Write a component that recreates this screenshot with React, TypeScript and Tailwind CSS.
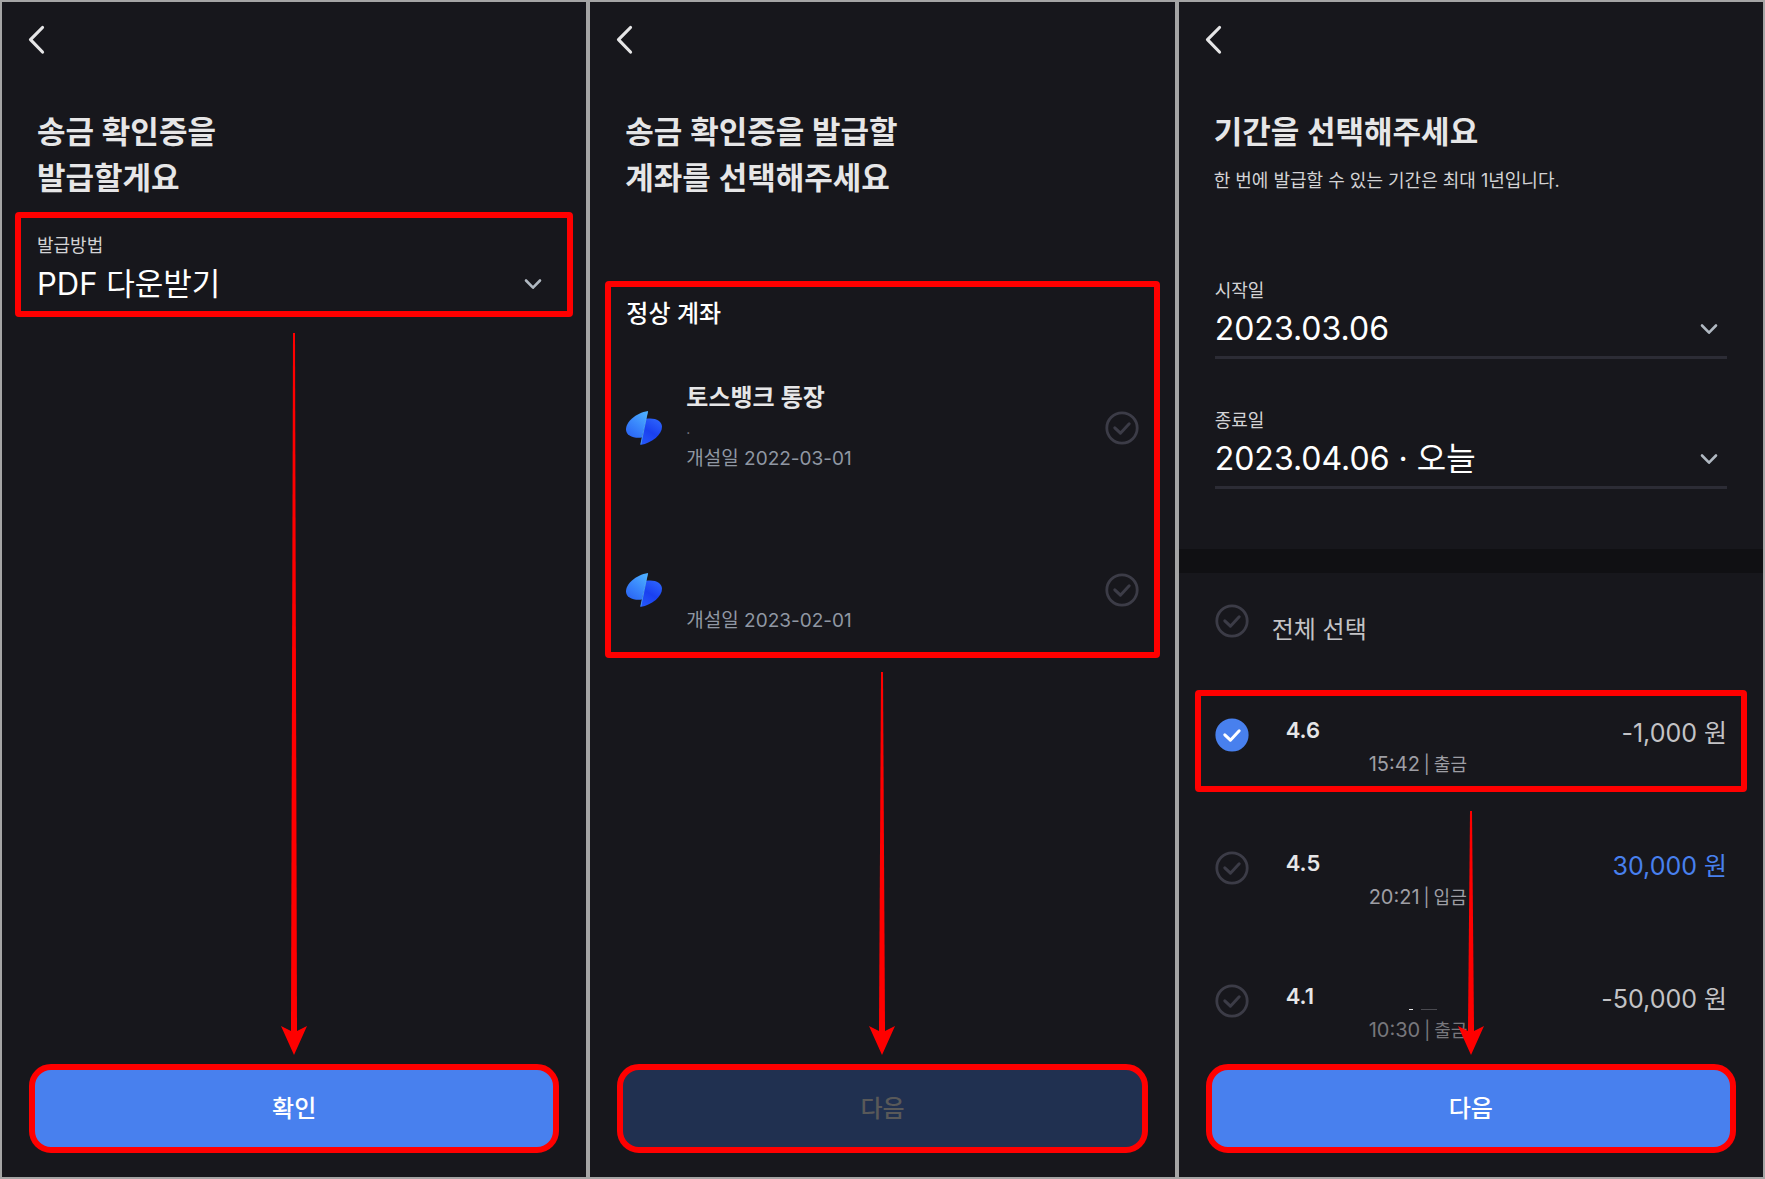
import React from "react";
import clsx from "clsx";

const accounts = [
  { id: "a1", name: "토스뱅크 통장", number: ".", opened: "개설일 2022-03-01" },
  { id: "a2", name: "", number: "", opened: "개설일 2023-02-01" },
];

const transfers = [
  { date: "4.6", time: "15:42", kind: "출금", amount: "-1,000 원", checked: true },
  { date: "4.5", time: "20:21", kind: "입금", amount: "30,000 원", income: true },
  { date: "4.1", time: "10:30", kind: "출금", amount: "-50,000 원", last: true },
];

const BackButton = () => (
  <button type="button" aria-label="뒤로" className="ml-6 mt-5 flex h-9 w-6 items-center">
    <svg width="20" height="30" viewBox="0 0 20 30" fill="none">
      <path
        d="M16.5 2.5L4.5 14.7L16.5 27"
        stroke="#e6e6e7"
        strokeWidth="3.2"
        strokeLinecap="round"
        strokeLinejoin="round"
      />
    </svg>
  </button>
);

const Header = ({ children }: { children: React.ReactNode }) => (
  <header>
    <BackButton />
    <h1 className="ml-[35px] mt-[51px] text-[31px] leading-[46px] font-semibold text-[#e6e6e7]">
      {children}
    </h1>
  </header>
);

type FieldProps = {
  id: string;
  label: string;
  value: string;
  underline?: boolean;
};

const Field = ({ id, label, value, underline }: FieldProps) => (
  <div className={clsx("pb-[7px]", underline && "border-b-3 border-[#2c2c35]")}>
    <label htmlFor={id} className="block text-lg leading-6 text-[#d3d3d5]">
      {label}
    </label>
    <div className="relative mt-1.5">
      <select
        id={id}
        className={clsx(
          "block h-10 w-full appearance-none bg-transparent p-0 leading-10 text-white outline-none",
          underline ? "text-[32px]" : "text-[31px]"
        )}
      >
        <option>{value}</option>
      </select>
      <svg
        className="pointer-events-none absolute right-2 top-3 h-4 w-5"
        viewBox="0 0 20 16"
        fill="none"
      >
        <path
          d="M3 4.5L10 11.7L17 4.5"
          stroke="#b0b8c1"
          strokeWidth="2.6"
          strokeLinecap="round"
          strokeLinejoin="round"
        />
      </svg>
    </div>
  </div>
);

type CheckProps = {
  type: "radio" | "checkbox";
  label: string;
  name?: string;
  checked?: boolean;
};

const Check = ({ type, label, name, checked }: CheckProps) => (
  <label className="relative block h-[34px] w-[34px] shrink-0 cursor-pointer">
    <input
      type={type}
      name={name}
      aria-label={label}
      defaultChecked={checked}
      className="peer sr-only"
    />
    <svg
      viewBox="0 0 34 34"
      fill="none"
      className="h-full w-full fill-transparent stroke-[#3c3c47] peer-checked:fill-[#4880ee] peer-checked:stroke-[#4880ee] peer-checked:[&>path]:stroke-white"
    >
      <circle cx="17" cy="17" r="15.2" strokeWidth="2.8" />
      <path
        d="M9.8 16.8L15.4 22.2L24.2 12.8"
        fill="none"
        strokeWidth="3"
        strokeLinecap="round"
        strokeLinejoin="round"
      />
    </svg>
  </label>
);

const BankLogo = ({ id }: { id: string }) => (
  <svg viewBox="0 0 36 34" className="h-[34px] w-9 shrink-0">
    <defs>
      <linearGradient id={`${id}-l`} x1="0.85" y1="0.1" x2="0.3" y2="1">
        <stop offset="0" stopColor="#4aabff" />
        <stop offset="0.5" stopColor="#3a88fc" />
        <stop offset="1" stopColor="#2c68f4" />
      </linearGradient>
      <linearGradient id={`${id}-r`} x1="0.7" y1="0" x2="0.2" y2="1">
        <stop offset="0" stopColor="#2c62fa" />
        <stop offset="0.5" stopColor="#1a40f0" />
        <stop offset="1" stopColor="#2456f8" />
      </linearGradient>
    </defs>
    <path d="M20 7.8C29 6.2 36 10 36 15.8C36 23.4 26.5 32 14.4 34Z" fill={`url(#${id}-r)`} />
    <path d="M22 0C9.5 2 0 11 0 18.4C0 24.2 7 27.7 15.9 26.6Z" fill={`url(#${id}-l)`} />
    <path d="M21.6 0.4L14.8 33.4" stroke="#58b4ff" strokeWidth="0.7" />
  </svg>
);

// thin at the start, grows towards the head
const Arrow = ({ className }: { className?: string }) => (
  <div className={clsx("pointer-events-none flex flex-col items-center", className)}>
    <svg viewBox="0 0 6 100" preserveAspectRatio="none" className="min-h-0 w-1.5 flex-1">
      <path d="M2 0H4L6 100H0Z" fill="#ff0000" />
    </svg>
    <svg viewBox="0 0 26 29" className="-mt-px h-[29px] w-[26px] shrink-0">
      <path d="M0 0L10 5V0H16V5L26 0L13 29Z" fill="#ff0000" />
    </svg>
  </div>
);

const SubmitButton = ({ children, disabled }: { children: string; disabled?: boolean }) => (
  <div className="mx-[27px] mb-6">
    <button
      type="button"
      disabled={disabled}
      className={clsx(
        "block h-[89px] w-full rounded-[22px] border-6 border-[#ff0000] text-2xl font-medium",
        disabled ? "bg-[#203050] text-[#595959]" : "bg-[#4880ee] text-white"
      )}
    >
      {children}
    </button>
  </div>
);

const IssueMethod = () => (
  <section className="flex flex-col bg-[#17171c]">
    <Header>
      송금 확인증을
      <br />
      발급할게요
    </Header>
    <div className="mx-[13px] mt-[11px] rounded-sm border-6 border-[#ff0000] px-4 pt-4">
      <Field id="method" label="발급방법" value="PDF 다운받기" />
    </div>
    <Arrow className="mb-[9px] mt-4 flex-1" />
    <SubmitButton>확인</SubmitButton>
  </section>
);

const SelectAccount = () => (
  <section className="flex flex-col bg-[#17171c]">
    <Header>
      송금 확인증을 발급할
      <br />
      계좌를 선택해주세요
    </Header>
    <div className="mx-[15px] mt-20 rounded-sm border-6 border-[#ff0000] px-[15px] pb-4 pt-[11px]">
      <h2 className="text-2xl leading-8 font-medium text-white">정상 계좌</h2>
      <ul className="mt-[52px] space-y-[70px]">
        {accounts.map((account) => (
          <li key={account.id} className="flex items-center">
            <BankLogo id={account.id} />
            <div className="ml-6 flex-1">
              <p className="h-8 text-2xl leading-8 font-semibold text-[#e6e6e7]">{account.name}</p>
              <p className="h-[30px] text-sm leading-[30px] text-[#7e7e87]">{account.number}</p>
              <p className="text-[19px] leading-[30px] text-[#9097a3]">{account.opened}</p>
            </div>
            <Check type="radio" name="account" label={account.opened} />
          </li>
        ))}
      </ul>
    </div>
    <Arrow className="mb-[9px] mt-3.5 flex-1" />
    <SubmitButton disabled>다음</SubmitButton>
  </section>
);

const SelectPeriod = () => (
  <section className="flex flex-col bg-[#17171c]">
    <Header>기간을 선택해주세요</Header>
    <p className="ml-[35px] mt-3 text-lg leading-7 text-[#d3d3d5]">
      한 번에 발급할 수 있는 기간은 최대 1년입니다.
    </p>
    <div className="mx-9 mt-[84px] space-y-[50px]">
      <Field id="start" label="시작일" value="2023.03.06" underline />
      <Field id="end" label="종료일" value="2023.04.06 · 오늘" underline />
    </div>
    <div className="mt-[60px] h-6 bg-[#101013]" />
    <div className="ml-9 mt-[31px] flex items-start">
      <Check type="checkbox" label="전체 선택" />
      <span className="ml-[23px] mt-2.5 text-2xl leading-8 text-[#c3c3c6]">전체 선택</span>
    </div>
    <div className="relative mt-11 flex-1">
      <ul className="mx-4 space-y-[31px]">
        {transfers.map((item) => (
          <li
            key={item.date}
            className={clsx(
              "flex h-[102px] items-start rounded-sm border-6 px-3.5 pt-[22px]",
              item.checked ? "border-[#ff0000]" : "border-transparent"
            )}
          >
            <Check type="checkbox" label={item.date} checked={item.checked} />
            <span className="ml-[37px] w-[83px] text-[22px] leading-6 font-semibold text-[#e6e6e7]">
              {item.date}
            </span>
            <div className="flex-1">
              <div className="flex h-8 items-end gap-2 pb-1.5 pl-10">
                {item.last && (
                  <>
                    <span className="h-px w-1 bg-[#e6e6e7]" />
                    <span className="h-px w-4 bg-[#4a4a50]" />
                  </>
                )}
              </div>
              <p
                className={clsx(
                  "flex items-baseline gap-1 text-lg leading-7",
                  item.last ? "text-[#77777c]" : "text-[#9e9ea4]"
                )}
              >
                <span className="text-xl leading-7">{item.time}</span>
                <span>|</span>
                <span>{item.kind}</span>
              </p>
            </div>
            <span
              className={clsx(
                "text-[25px] leading-[30px]",
                item.income ? "text-[#4880ee]" : "text-[#c3c3c6]"
              )}
            >
              {item.amount}
            </span>
          </li>
        ))}
      </ul>
      <Arrow className="absolute inset-x-0 bottom-[9px] top-[121px]" />
    </div>
    <SubmitButton>다음</SubmitButton>
  </section>
);

export default function App() {
  return (
    <main className="grid min-h-screen grid-cols-3 gap-1 bg-[#a5a5a5] p-0.5 font-['Inter','Noto_Sans_CJK_KR',sans-serif]">
      <IssueMethod />
      <SelectAccount />
      <SelectPeriod />
    </main>
  );
}
